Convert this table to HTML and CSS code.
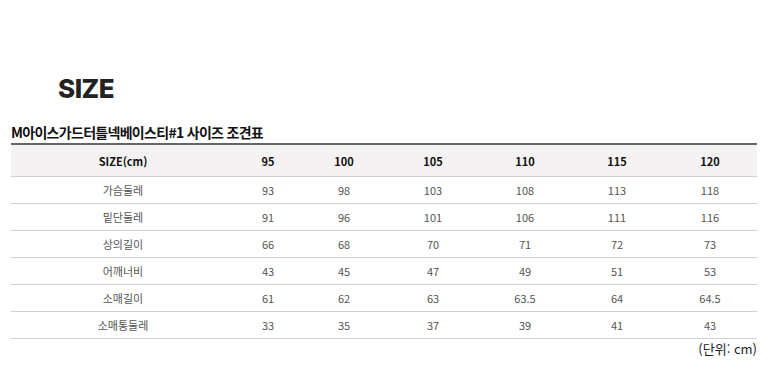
FILE: index.html
```html
<!DOCTYPE html>
<html lang="ko">

<head>
    <meta charset="UTF-8">
    <meta name="viewport" content="width=device-width, initial-scale=1.0">
    <title>SIZE</title>
    <link rel="stylesheet" href="styles.css">
</head>

<body>
    <div class="container">
        <h2 class="size-title">SIZE</h2>
        <h3 class="table-title">M아이스가드터틀넥베이스티#1 사이즈 조견표</h3>
        <table class="size-table">
            <colgroup>
                <col class="col-name">
                <col class="col-a">
                <col class="col-b">
                <col class="col-c">
                <col class="col-c">
                <col class="col-c">
                <col>
            </colgroup>
            <thead>
                <tr>
                    <th>SIZE(cm)</th>
                    <th>95</th>
                    <th>100</th>
                    <th>105</th>
                    <th>110</th>
                    <th>115</th>
                    <th>120</th>
                </tr>
            </thead>
            <tbody>
                <tr>
                    <td>가슴둘레</td>
                    <td>93</td><td>98</td><td>103</td><td>108</td><td>113</td><td>118</td>
                </tr>
                <tr>
                    <td>밑단둘레</td>
                    <td>91</td><td>96</td><td>101</td><td>106</td><td>111</td><td>116</td>
                </tr>
                <tr>
                    <td>상의길이</td>
                    <td>66</td><td>68</td><td>70</td><td>71</td><td>72</td><td>73</td>
                </tr>
                <tr>
                    <td>어깨너비</td>
                    <td>43</td><td>45</td><td>47</td><td>49</td><td>51</td><td>53</td>
                </tr>
                <tr>
                    <td>소매길이</td>
                    <td>61</td><td>62</td><td>63</td><td>63.5</td><td>64</td><td>64.5</td>
                </tr>
                <tr>
                    <td>소매통둘레</td>
                    <td>33</td><td>35</td><td>37</td><td>39</td><td>41</td><td>43</td>
                </tr>
            </tbody>
        </table>
        <p class="unit">(단위: cm)</p>
    </div>
</body>

</html>
```

FILE: styles.css
```css
body {
    margin: 0;
    background-color: white;
    font-family: "Noto Sans CJK KR", "Noto Sans", sans-serif;
    color: #333;
}

.container {
    padding: 0 13px 0 11px;
}

.size-title {
    font-family: Inter, "Noto Sans", sans-serif;
    font-weight: 800;
    font-size: 26px;
    line-height: 26px;
    letter-spacing: -0.5px;
    color: #222;
    margin: 0;
    padding: 76px 0 0 47px;
}

.table-title {
    font-size: 14px;
    font-weight: bold;
    line-height: 18px;
    color: #111;
    margin: 21px 0 0 0;
    letter-spacing: -0.7px;
}

.size-table {
    width: 100%;
    border-collapse: collapse;
    table-layout: fixed;
    border-top: 2px solid #666;
    margin-top: 2px;
}

.col-name {
    width: 224px;
}

.col-a {
    width: 66px;
}

.col-b {
    width: 86px;
}

.col-c {
    width: 92px;
}

.size-table th,
.size-table td {
    text-align: center;
    font-size: 11px;
    padding: 0;
    border-bottom: 1px solid #d2d2d2;
}

.size-table th {
    height: 31px;
    background-color: #f4f2f2;
    font-weight: bold;
    color: #111;
}

.size-table td {
    height: 26px;
    color: #555;
}

.unit {
    text-align: right;
    font-size: 13px;
    color: #222;
    margin: 1px 0 0 0;
    line-height: 18px;
}
```
